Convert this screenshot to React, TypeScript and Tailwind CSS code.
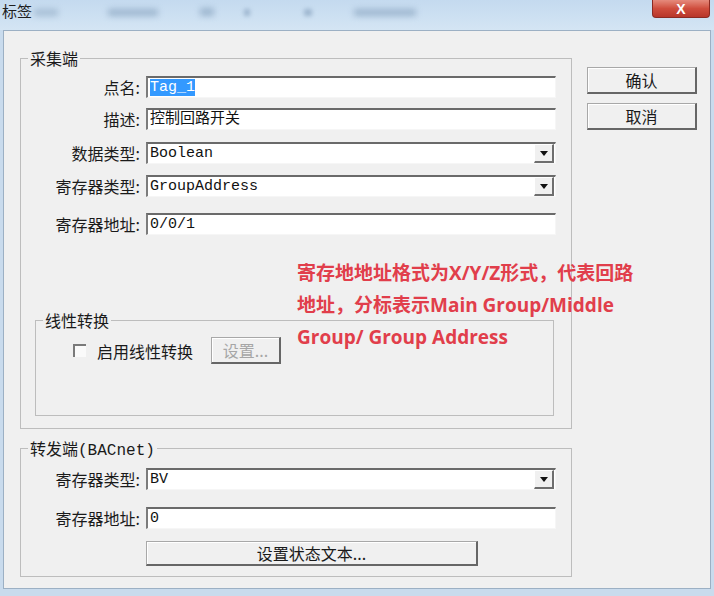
import type { ReactNode } from 'react';

const cjk = "font-['Noto_Sans_CJK_SC',sans-serif]";
const mono = "font-['Liberation_Mono','Noto_Sans_CJK_SC',monospace]";

function Arrow() {
  return (
    <div className="ml-auto mr-[1px] w-[20px] h-[19px] bg-[#f0f0f0] border-t border-l border-t-white border-l-white border-b-2 border-r-2 border-b-[#6e6e6e] border-r-[#6e6e6e] flex items-center justify-center">
      <svg width="8" height="5" viewBox="0 0 8 5">
        <path d="M0 0 L8 0 L4 5 Z" fill="#111" />
      </svg>
    </div>
  );
}

function Field({ children, select }: { children: ReactNode; select?: boolean }) {
  return (
    <div className="h-[22px] w-[410px] bg-white border-t-2 border-l-2 border-t-[#6a6a6a] border-l-[#7c7c7c] border-b border-r border-b-[#f6f6f6] border-r-[#f6f6f6] flex items-center">
      <div className={`pl-[2px] text-[15px] leading-[18px] text-[#111] ${mono}`}>{children}</div>
      {select && <Arrow />}
    </div>
  );
}

function Row({ label, mt, children }: { label: string; mt: string; children: ReactNode }) {
  return (
    <div className={`flex items-center ${mt}`}>
      <div className="w-[125px] pr-[6px] text-right text-[16px] leading-[20px] text-[#1a1a1a]">{label}</div>
      {children}
    </div>
  );
}

function Legend({ children }: { children: ReactNode }) {
  return (
    <div className="-mt-[11px] ml-[7px] w-fit px-[2px] bg-[#f0f0f0] text-[16px] leading-[20px] text-[#1a1a1a]">
      {children}
    </div>
  );
}

function Btn({ children, className = '', disabled }: { children: ReactNode; className?: string; disabled?: boolean }) {
  return (
    <div
      className={`bg-[#f0f0f0] border border-[#a8a8a8] border-b-2 border-r-2 border-b-[#666] border-r-[#666] shadow-[inset_1px_1px_0_#fff] flex items-center justify-center text-[16px] leading-[20px] ${
        disabled ? 'text-[#a6a6a6]' : 'text-[#1a1a1a]'
      } ${className}`}
    >
      {children}
    </div>
  );
}

export default function App() {
  return (
    <div className={`w-[714px] h-[596px] relative overflow-hidden bg-[#c9dbed] flex flex-col ${cjk}`}>
      {/* title bar */}
      <div className="h-[30px] relative flex items-start justify-between bg-gradient-to-b from-[#c4daef] to-[#d4e5f4]">
        <span className="absolute left-[34px] top-[9px] w-[24px] h-[7px] bg-[#8ea8c2] blur-[3px] opacity-60" />
        <span className="absolute left-[108px] top-[9px] w-[50px] h-[7px] bg-[#7f9bb8] blur-[3px] opacity-60" />
        <span className="absolute left-[200px] top-[8px] w-[14px] h-[8px] bg-[#7f9bb8] blur-[3px] opacity-60" />
        <span className="absolute left-[244px] top-[9px] w-[6px] h-[7px] bg-[#7f9bb8] blur-[2px] opacity-60" />
        <span className="absolute left-[304px] top-[9px] w-[8px] h-[7px] bg-[#7f9bb8] blur-[2px] opacity-60" />
        <span className="absolute left-[354px] top-[9px] w-[62px] h-[7px] bg-[#7f9bb8] blur-[3px] opacity-60" />
        <span className="relative pl-[2px] pt-[3px] text-[15px] leading-[16px] text-[#1e1e1e]">标签</span>
        <div className="relative mr-[4px] w-[58px] h-[18px] rounded-b-[4px] border border-t-0 border-[#8b2a22] bg-gradient-to-b from-[#e58a7c] via-[#cf4d3d] to-[#b8362a] flex items-center justify-center">
          <span className="font-['Liberation_Sans',sans-serif] font-bold text-[14px] leading-[14px] text-white">X</span>
        </div>
      </div>

      {/* client area */}
      <div className="ml-[3px] mr-[3px] h-[559px] border border-[#9cb0c4] bg-[#f0f0f0] flex">
        <div className="pl-[16px] pt-[27px]">
          {/* 采集端 */}
          <div className="w-[552px] h-[371px] border border-[#bdbdbd]">
            <Legend>采集端</Legend>
            <Row label="点名:" mt="mt-[8px]">
              <Field>
                <span className="bg-[#3399ff] text-white">Tag_1</span>
              </Field>
            </Row>
            <Row label="描述:" mt="mt-[10px]">
              <Field>控制回路开关</Field>
            </Row>
            <Row label="数据类型:" mt="mt-[12px]">
              <Field select>Boolean</Field>
            </Row>
            <Row label="寄存器类型:" mt="mt-[11px]">
              <Field select>GroupAddress</Field>
            </Row>
            <Row label="寄存器地址:" mt="mt-[16px]">
              <Field>0/0/1</Field>
            </Row>

            {/* 线性转换 */}
            <div className="mt-[85px] ml-[14px] w-[519px] h-[96px] border border-[#bdbdbd]">
              <Legend>线性转换</Legend>
              <div className="mt-[7px] h-[27px] flex items-center">
                <div className="ml-[37px] w-[13px] h-[13px] bg-[#fafafa] border-t-2 border-l-2 border-[#7a7a7a]" />
                <span className="ml-[11px] text-[16px] leading-[20px] text-[#1a1a1a]">启用线性转换</span>
                <Btn disabled className="ml-[18px] w-[70px] h-[27px]">
                  设置...
                </Btn>
              </div>
            </div>
          </div>

          {/* 转发端 */}
          <div className="mt-[19px] w-[552px] h-[129px] border border-[#bdbdbd]">
            <Legend>
              转发端<span className={mono}>(BACnet)</span>
            </Legend>
            <Row label="寄存器类型:" mt="mt-[7px]">
              <Field select>BV</Field>
            </Row>
            <Row label="寄存器地址:" mt="mt-[17px]">
              <Field>0</Field>
            </Row>
            <div className="mt-[12px] ml-[125px]">
              <Btn className="w-[332px] h-[25px]">设置状态文本...</Btn>
            </div>
          </div>
        </div>

        <div className="ml-[15px] pt-[36px] flex flex-col gap-[9px]">
          <Btn className="w-[110px] h-[27px]">确认</Btn>
          <Btn className="w-[110px] h-[27px]">取消</Btn>
        </div>
      </div>

      {/* annotation */}
      <div className="absolute left-[297px] top-[257px] font-['Open_Sans','Noto_Sans_CJK_SC',sans-serif] font-bold text-[19px] leading-[32px] text-[#e13e4b]">
        <div>寄存地地址格式为X/Y/Z形式，代表回路</div>
        <div>地址，分标表示Main Group/Middle</div>
        <div>Group/ Group Address</div>
      </div>
    </div>
  );
}
